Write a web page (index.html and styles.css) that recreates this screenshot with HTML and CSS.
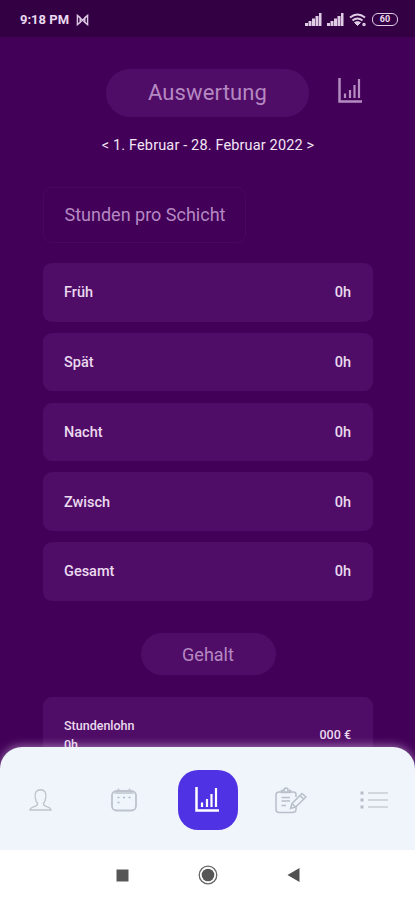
FILE: index.html
```html
<!DOCTYPE html>
<html lang="de">
<head>
  <meta charset="UTF-8">
  <title>Auswertung</title>
  <meta name="viewport" content="width=device-width, initial-scale=1.0">
  <link rel="stylesheet" href="styles.css">
</head>
<body>

  <header class="statusbar">
    <span class="clock">9:18 PM</span>
    <svg class="status-app" width="13" height="12" viewBox="0 0 14 12" fill="none" stroke="#dcc8e4" stroke-width="1.500">
      <path d="M1.500 1v10l3-2.500V3.500zM12.500 1v10l-3-2.500V3.500zM1.500 1.500L7 6l5.500-4.500M4.500 8.500L7 6l2.500 2.500"/>
    </svg>
    <div class="status-icons">
      <svg width="17" height="13" viewBox="0 0 17 13" fill="#dfcde6">
        <path d="M0 10h3v3H0zM3.500 8h3v5h-3zM7 5.500h3V13H7zM10.500 3h3v10h-3zM14 0h2.500v13H14z"/>
      </svg>
      <svg width="17" height="13" viewBox="0 0 17 13" fill="#dfcde6">
        <path d="M0 10h3v3H0zM3.500 8h3v5h-3zM7 5.500h3V13H7zM10.500 3h3v10h-3zM14 0h2.500v13H14z"/>
      </svg>
      <svg class="wifi" width="18" height="14" viewBox="0 0 18 14" fill="none" stroke="#dfcde6" stroke-width="2">
        <path d="M1 4.500Q8.500-1.500 16 4.500M3.500 7.500Q8.500 3.500 13.500 7.500"/>
        <path d="M5.500 9.500Q8.500 7.500 11.500 9.500L8.500 12.500z" fill="#dfcde6" stroke-width="1"/>
        <circle cx="15" cy="11.500" r="1" stroke-width="1.500"/>
      </svg>
      <span class="battery">60</span>
    </div>
  </header>

  <main>
    <div class="title-row">
      <h1>Auswertung</h1>
      <svg width="25" height="26" viewBox="0 0 25 26" fill="none" stroke="#b48cc0">
        <path d="M1.500 0v23.500H24" stroke-width="2.500"/>
        <path d="M7 15.500V20M12 12v8M16.500 7v13M21 1v19" stroke-width="2.200"/>
      </svg>
    </div>
    <p class="period">&lt; 1. Februar - 28. Februar 2022 &gt;</p>

    <h2 class="shift-title">Stunden pro Schicht</h2>

    <div class="shifts">
      <div class="card"><span>Früh</span><span>0h</span></div>
      <div class="card"><span>Spät</span><span>0h</span></div>
      <div class="card"><span>Nacht</span><span>0h</span></div>
      <div class="card"><span>Zwisch</span><span>0h</span></div>
      <div class="card"><span>Gesamt</span><span>0h</span></div>
    </div>

    <h2 class="salary-title">Gehalt</h2>

    <div class="card salary">
      <div>Stundenlohn<br>0h</div>
      <span>000 €</span>
    </div>
  </main>

  <nav>
    <a class="tab">
      <svg width="24" height="24" viewBox="0 0 24 24" fill="none" stroke="#bfc3c9" stroke-width="1.400">
        <path d="M8.500 15.500C7 13.500 6.500 12 6.300 10C5.300 4.500 7.500 1.700 11.500 1.700S17.700 4.500 16.700 10C16.500 12 16 13.500 14.500 15.500C13.500 19.500 21.500 17.500 22 22H1C1.500 17.500 9.500 19.500 8.500 15.500z"/>
      </svg>
    </a>
    <a class="tab">
      <svg width="26" height="24" viewBox="0 0 26 24" fill="none" stroke="#bcc3cc" stroke-width="1.800">
        <rect x="1" y="3" width="24" height="19.500" rx="4.500"/>
        <path d="M3.500 5h19M7.500 .5V3M18.500 .5V3" stroke-width="1.600"/>
        <path d="M6.500 9.500h2M12 9.500h2M17.500 9.500h2M6.500 14.500h2" stroke="#a9bccd" stroke-width="1.500"/>
      </svg>
    </a>
    <a class="tab active">
      <svg width="25" height="26" viewBox="0 0 25 26" fill="none" stroke="#fff">
        <path d="M1.500 0v23.500H24" stroke-width="2.500"/>
        <path d="M7 15.500V20M12 12v8M16.500 7v13M21 1v19" stroke-width="2.200"/>
      </svg>
    </a>
    <a class="tab">
      <svg width="32" height="27" viewBox="0 0 32 27" fill="none" stroke="#b8bfc8" stroke-width="1.500">
        <path d="M17 25.500Q21 25.500 21 22.500V18M21 10V7.500Q21 5 18.500 5H4Q1 5 1 8v14.500Q1 25.500 4 25.500H17"/>
        <path d="M6.500 5.500V3.500H9Q9 1 11 1t2 2.500h2.500v2z"/>
        <path d="M6.500 10.500H15M6.500 14H15M6.500 18.500h4.500"/>
        <path d="M15.500 21.500L17 16.500L27 6.500L31 10L20.500 20zM25 8.500l3.500 3.500M17 16.500l3.500 3.500" fill="#f0f5fc"/>
      </svg>
    </a>
    <a class="tab">
      <svg width="28" height="20" viewBox="0 0 28 20" stroke="#c7ccd2" stroke-width="1.700">
        <path d="M8 3h20M8 10h20M8 17h20"/>
        <path d="M.5 3h3M.5 10h3M.5 17h3" stroke="#b5bcc5" stroke-width="3"/>
      </svg>
    </a>
  </nav>

  <footer>
    <svg width="13" height="13" viewBox="0 0 13 13"><path d="M.5.500h12v12H.5z" fill="#565656"/></svg>
    <svg width="20" height="20" viewBox="0 0 20 20">
      <circle cx="10" cy="10" r="8.800" fill="none" stroke="#666" stroke-width="1.300"/>
      <circle cx="10" cy="10" r="6.300" fill="#565656"/>
    </svg>
    <svg width="13" height="14" viewBox="0 0 13 14"><path d="M12.500 0v14L.5 7z" fill="#505050"/></svg>
  </footer>

</body>
</html>
```
FILE: styles.css
```css
* {
  box-sizing: border-box;
}

body {
  font-family: Roboto, "Liberation Sans", sans-serif;
  margin: 0;
  height: 900px;
  display: flex;
  flex-direction: column;
  position: relative;
  overflow: hidden;
  background-color: #430059;
  color: #ead9ef;
}

.statusbar {
  height: 37px;
  flex: none;
  padding: 2px 17px 0 20px;
  background-color: #340044;
  display: flex;
  align-items: center;
}

.clock {
  font-size: 13px;
  font-weight: bold;
  width: 56px;
  white-space: nowrap;
}

.status-icons {
  display: flex;
  align-items: center;
  gap: 5px;
  margin-left: auto;
}

.battery {
  width: 26px;
  height: 13px;
  border: 1.5px solid #dfcde6;
  border-radius: 6px;
  font-size: 9px;
  line-height: 11px;
  font-weight: bold;
  text-align: center;
}

main {
  flex: 1;
  min-height: 0;
  overflow: hidden;
  padding: 32px 42px 0 43px;
}

.title-row {
  display: flex;
  align-items: center;
  gap: 29px;
  padding-left: 63px;
}

.title-row svg {
  margin-bottom: 5px;
}

h1,
h2 {
  margin: 0;
  font-weight: normal;
  color: #b588c2;
  display: flex;
  align-items: center;
  justify-content: center;
}

h1 {
  width: 203px;
  height: 48px;
  padding-bottom: 1px;
  border-radius: 24px;
  background-color: #500d67;
  font-size: 22px;
  letter-spacing: 0.15px;
}

.period {
  margin: 20px 0 0;
  font-size: 14.5px;
  line-height: 18px;
  letter-spacing: 0.15px;
  text-align: center;
  color: #f2e6f5;
}

.shift-title {
  width: 203px;
  height: 56px;
  margin: 32px 0 20px;
  padding: 0 0 2px 1px;
  border: 1px solid #490760;
  border-radius: 9px;
  font-size: 18px;
}

.shifts {
  display: grid;
  gap: 11.3px;
}

.card {
  height: 58.5px;
  padding: 1px 22px 0 21px;
  border-radius: 9px;
  background-color: #500d67;
  display: flex;
  align-items: center;
  justify-content: space-between;
  font-size: 14.5px;
  font-weight: 500;
}

.salary-title {
  width: 135px;
  height: 42px;
  margin: 32px auto 22px;
  padding-top: 1px;
  border-radius: 21px;
  background-color: #500d67;
  font-size: 18px;
}

.salary {
  height: 76px;
  padding-top: 0;
  font-size: 12.5px;
  line-height: 19px;
}

nav {
  position: absolute;
  left: 0;
  right: 0;
  bottom: 50px;
  height: 103px;
  display: flex;
  justify-content: space-between;
  align-items: center;
  padding: 3px 11px 0;
  border-radius: 22px 22px 0 0;
  background-color: #f0f5fc;
  box-shadow: 0 -1px 10px rgba(240, 225, 250, 0.5);
}

.tab {
  width: 60px;
  height: 60px;
  border-radius: 20px;
  display: flex;
  align-items: center;
  justify-content: center;
}

.active {
  background-color: #4e32e3;
}

footer {
  position: relative;
  height: 50px;
  flex: none;
  display: flex;
  justify-content: center;
  align-items: center;
  gap: 69px;
  background-color: #fff;
}
```
